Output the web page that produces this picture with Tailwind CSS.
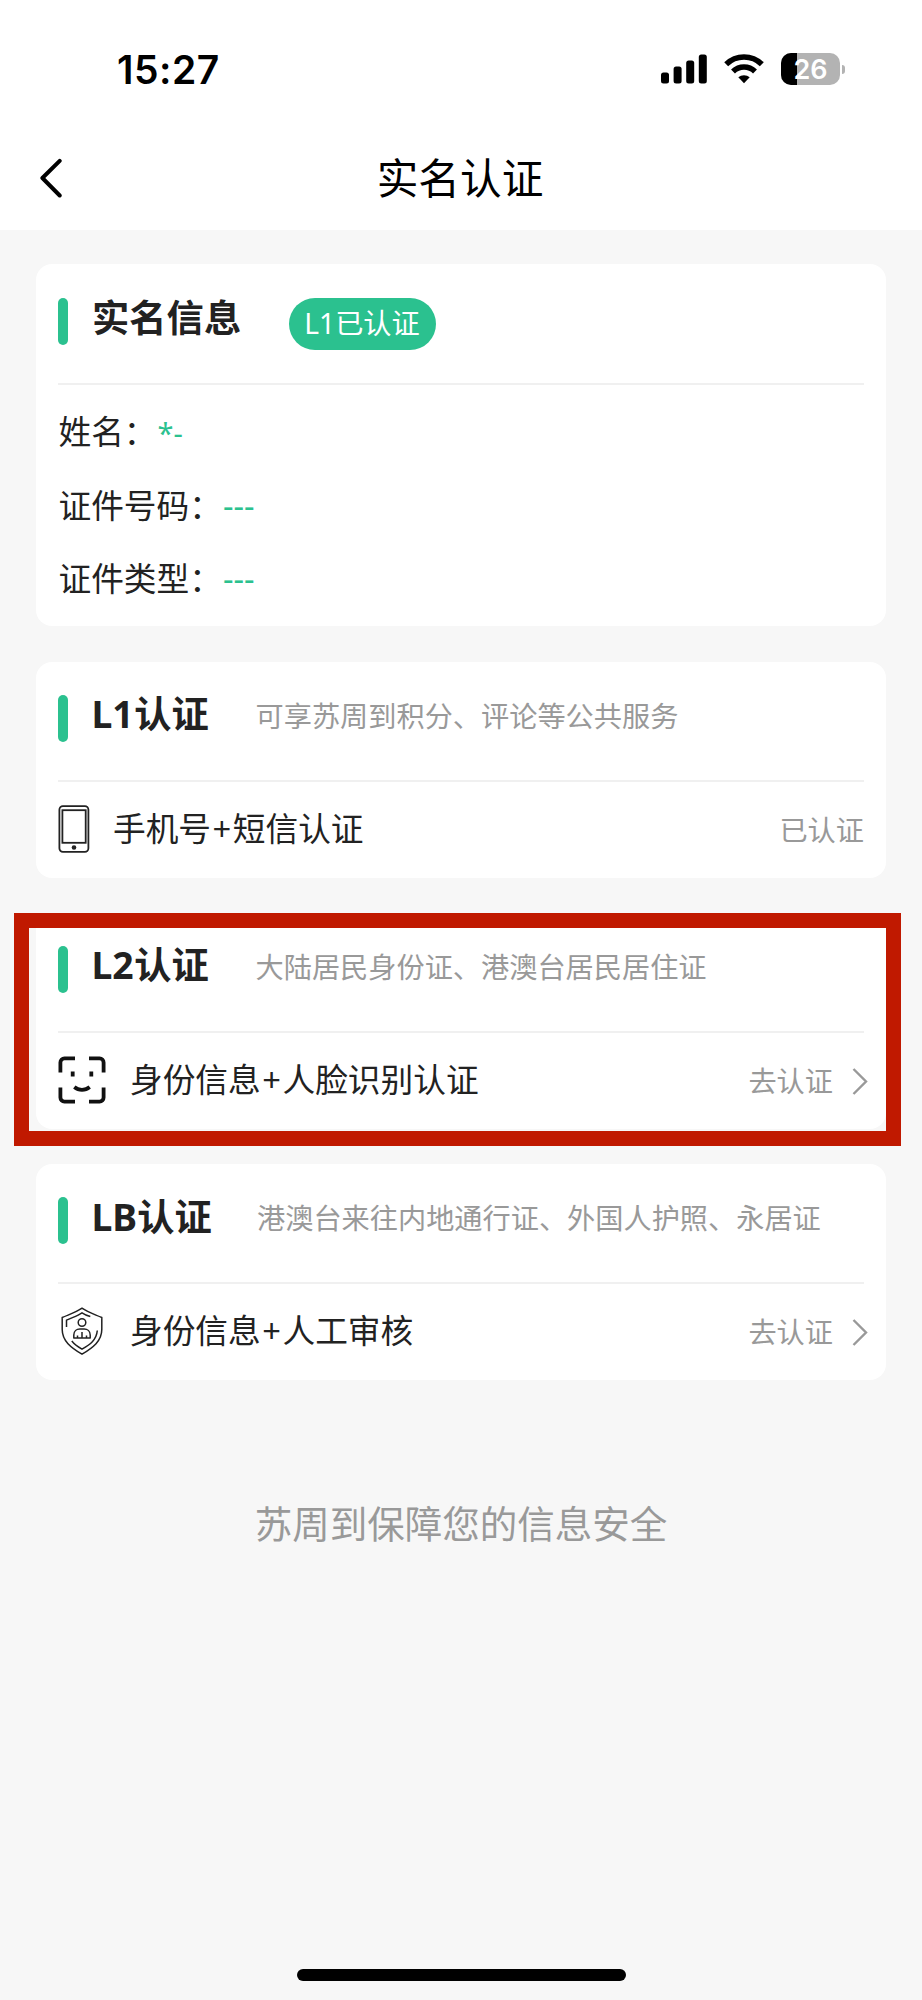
<!DOCTYPE html>
<html lang="zh-CN">
<head>
<meta charset="UTF-8">
<title>实名认证</title>
<script src="https://cdn.jsdelivr.net/npm/@tailwindcss/browser@4"></script>
</head>
<body class="w-[922px] h-[2000px] bg-[#f7f7f7] flex flex-col overflow-hidden text-[#222] font-['Noto_Sans','Noto_Sans_CJK_SC',sans-serif]">

<header class="h-[230px] bg-white shrink-0 flex flex-col">
  <!-- status bar -->
  <div class="h-[126px] pt-[12px] pl-[117px] pr-[77px] flex items-center justify-between">
    <div class="text-black text-[39px] leading-none font-semibold font-['Inter',sans-serif] tracking-[0.5px]">15:27</div>
    <div class="flex items-center">
      <svg class="w-[46px] h-[30px]" viewBox="0 0 46 30"><rect x="0" y="18.5" width="8" height="11" rx="2.5"/><rect x="12.6" y="12.5" width="8" height="17" rx="2.5"/><rect x="25.2" y="6.5" width="8" height="23" rx="2.5"/><rect x="37.8" y="0.5" width="8" height="29" rx="2.5"/></svg>
      <svg class="w-[40px] h-[30px] ml-[16.5px]" viewBox="0 0 40 30"><g fill="none" stroke="#000" stroke-width="5.6"><path d="M2.2 10.2A25.5 25.5 0 0 1 37.8 10.2"/><path d="M9 17.4A15.8 15.8 0 0 1 31 17.4"/></g><path d="M14.3 23.3A8.6 8.6 0 0 1 25.7 23.3L20 29.2Z"/></svg>
      <div class="relative ml-[17.5px] w-[59px] h-[32px] rounded-[10px] bg-[#b3b3b3] overflow-hidden flex items-center justify-center">
        <div class="absolute inset-y-0 left-0 w-[16px] bg-black"></div>
        <span class="relative text-white text-[27px] leading-none font-semibold font-['Inter',sans-serif]">26</span>
      </div>
      <div class="ml-[2px] w-[3px] h-[9px] rounded-r-full bg-[#b3b3b3]"></div>
    </div>
  </div>
  <!-- navigation bar -->
  <div class="h-[104px] pl-[39px] pr-[41px] grid grid-cols-[24px_1fr_24px] items-center">
    <svg class="w-[24px] h-[40px]" viewBox="0 0 24 40" fill="none" stroke="#000" stroke-width="4" stroke-linecap="round" stroke-linejoin="round"><path d="M20.7 2.8 3.4 20 20.7 37.5"/></svg>
    <h1 class="text-center text-black text-[41.7px] leading-[60px]">实名认证</h1>
  </div>
</header>

<main class="px-[36px] pt-[34px] flex flex-col">
  <section class="h-[362px] bg-white rounded-[16px] px-[22px]">
    <div class="h-[121px] pt-[34px] flex items-start border-b-2 border-[#f0f0f0]">
      <div class="w-[10px] h-[47px] rounded-full bg-[#2bc18f]"></div>
      <h2 class="ml-[24px] w-[196.500px] text-[37.3px] leading-[40px] font-bold">实名信息</h2>
      <div class="h-[52px] w-[147px] rounded-full bg-[#2bc18f] text-white text-[28.2px] leading-[51px] text-center whitespace-nowrap">L1已认证</div>
    </div>
    <div class="pt-[10px] pl-[0.5px] text-[32.7px] leading-[73px]">
      <p>姓名：<span class="ml-[1px] text-[29px] text-[#2bc18f]">*-</span></p>
      <p>证件号码：<span class="ml-[1px] text-[#2bc18f]">---</span></p>
      <p>证件类型：<span class="ml-[1px] text-[#2bc18f]">---</span></p>
    </div>
  </section>

  <section class="mt-[36px] h-[216px] bg-white rounded-[16px] px-[22px]">
    <div class="h-[120px] pt-[33px] flex items-start border-b-2 border-[#f0f0f0]">
      <div class="w-[10px] h-[47px] rounded-full bg-[#2bc18f]"></div>
      <h2 class="ml-[23.500px] w-[164px] text-[37.3px] leading-[38px] font-bold whitespace-nowrap">L1<span class="ml-[0.5px]">认证</span></h2>
      <p class="text-[28.2px] leading-[42px] text-[#999] whitespace-nowrap">可享苏周到积分、评论等公共服务</p>
    </div>
    <div class="h-[94px] flex items-center text-[32.7px]">
      <svg class="w-[32px] h-[48px]" viewBox="0 0 32 48" fill="none" stroke="#222" stroke-width="1.8"><rect x="1.4" y="1.2" width="29" height="45.6" rx="3.5"/><rect x="4.4" y="5.2" width="23.3" height="32.6"/><circle cx="16" cy="42.5" r="2.3" fill="#222" stroke="none"/></svg>
      <span class="ml-[23px]">手机号<span class="mx-[1.500px]">+</span>短信认证</span>
      <span class="ml-auto pt-[2px] text-[28.2px] text-[#999]">已认证</span>
    </div>
  </section>

  <section class="relative mt-[35px] h-[216px] bg-white rounded-[16px] px-[22px]">
    <div class="h-[120px] pt-[33px] flex items-start border-b-2 border-[#f0f0f0]">
      <div class="w-[10px] h-[47px] rounded-full bg-[#2bc18f]"></div>
      <h2 class="ml-[23.500px] w-[164px] text-[37.3px] leading-[38px] font-bold whitespace-nowrap">L2<span class="ml-[0.5px]">认证</span></h2>
      <p class="text-[28.2px] leading-[42px] text-[#999] whitespace-nowrap">大陆居民身份证、港澳台居民居住证</p>
    </div>
    <div class="h-[94px] flex items-center text-[32.7px]">
      <svg class="w-[48px] h-[48px]" viewBox="0 0 48 48" fill="none" stroke="#111" stroke-width="3.8"><path d="M2.4 16.5V6.4a4 4 0 0 1 4-4H17M31 2.4h10.6a4 4 0 0 1 4 4v10.1M45.6 31.5v10.1a4 4 0 0 1-4 4H31M17 45.6H6.4a4 4 0 0 1-4-4V31.5"/><path d="M14.7 15.5v5M33.3 15.5v5"/><path d="M16.3 31c4.5 3.8 10.9 3.8 15.4 0" stroke-width="3.6"/></svg>
      <span class="ml-[24px]">身份信息<span class="mx-[1.500px]">+</span>人脸识别认证</span>
      <span class="ml-auto pt-[2px] text-[28.2px] text-[#999]">去认证</span>
      <svg class="ml-[18px] mr-[-5px] mt-[2px] w-[18px] h-[28px]" viewBox="0 0 18 28" fill="none" stroke="#999" stroke-width="2.4"><path d="M2.5 2 15 14.5 2.5 27"/></svg>
    </div>
    <div class="absolute left-[-22px] top-0 w-[887px] h-[233px] border-[15px] border-[#c01900]"></div>
  </section>

  <section class="mt-[35px] h-[216px] bg-white rounded-[16px] px-[22px]">
    <div class="h-[120px] pt-[33px] flex items-start border-b-2 border-[#f0f0f0]">
      <div class="w-[10px] h-[47px] rounded-full bg-[#2bc18f]"></div>
      <h2 class="ml-[23.500px] w-[165.500px] text-[37.3px] leading-[39px] font-bold whitespace-nowrap">LB认证</h2>
      <p class="text-[28.2px] leading-[42px] text-[#999] whitespace-nowrap">港澳台来往内地通行证、外国人护照、永居证</p>
    </div>
    <div class="h-[94px] flex items-center text-[32.7px]">
      <svg class="w-[48px] h-[48px]" viewBox="0 0 48 48" fill="none" stroke="#222" stroke-width="1.5" stroke-linejoin="round"><path d="M24 1.2C18 5.5 11 7.5 4.2 10.5v12C4.2 34 13 40.500 24 47.200 35 40.500 43.800 34 43.800 22.500v-12C37 7.500 30 5.500 24 1.200Z"/><path d="M8.500 20v-6.800C14 10.500 19.500 9 24 5.800c3 2 5.500 3 8.300 3.700M39.300 23.500C38.500 33 32 37.500 24 42.200 20 39.800 16.500 37.500 13.800 34"/><circle cx="24" cy="15.500" r="3.800"/><path d="M15.800 31v-3c0-4 3-6 6-6h4.400c3 0 6 2 6 6v3ZM24 25v6M19.500 28.500v2.500M28.500 28.500v2.500"/></svg>
      <span class="ml-[24px]">身份信息<span class="mx-[1.500px]">+</span>人工审核</span>
      <span class="ml-auto pt-[2px] text-[28.2px] text-[#999]">去认证</span>
      <svg class="ml-[18px] mr-[-5px] mt-[2px] w-[18px] h-[28px]" viewBox="0 0 18 28" fill="none" stroke="#999" stroke-width="2.4"><path d="M2.5 2 15 14.5 2.5 27"/></svg>
    </div>
  </section>

  <p class="mt-[114px] text-center text-[37.5px] leading-[60px] text-[#999]">苏周到保障您的信息安全</p>
</main>

<div class="mt-auto mb-[19px] mx-auto w-[329px] h-[12px] rounded-full bg-black"></div>
</body>
</html>
